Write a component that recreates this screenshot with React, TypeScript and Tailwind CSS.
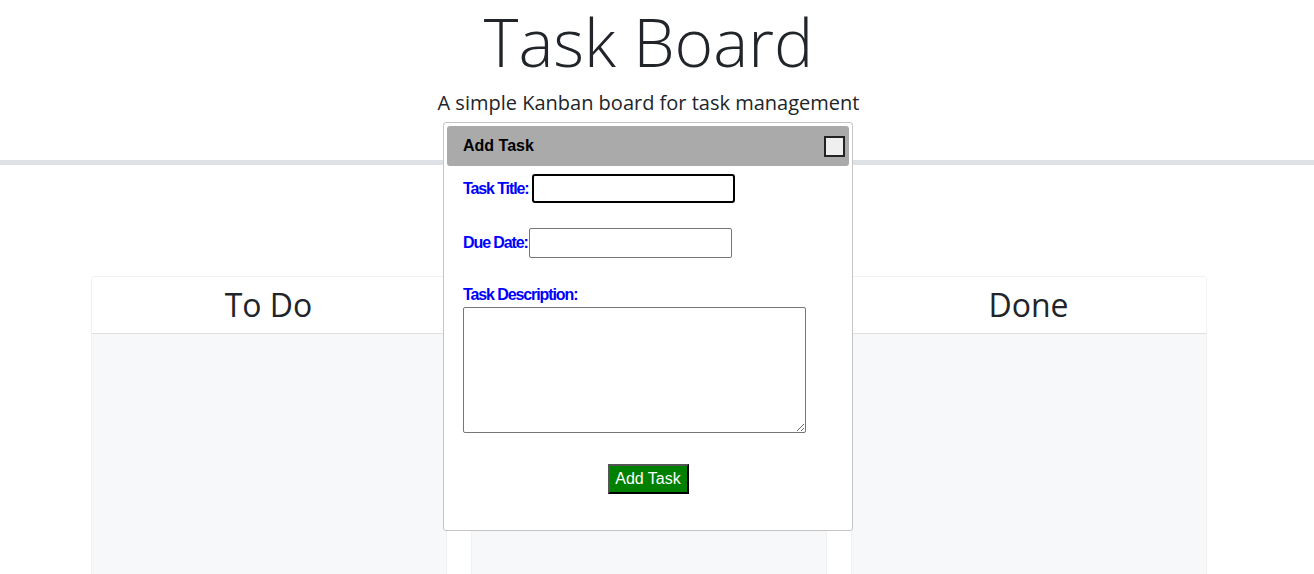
const columns = ['To Do', 'In Progress', 'Done'];

const labelClass =
  "shrink-0 whitespace-nowrap text-[#0000ff] text-[16px] font-bold tracking-[-1.1px] [font-family:'Liberation_Sans',Arial,sans-serif]";

export default function App() {
  return (
    <div className="relative min-h-[574px] overflow-hidden bg-white text-[#212529] [font-family:'Open_Sans',sans-serif]">
      <header className="border-b-[5px] border-[#dee2e6] pt-[1px] pb-[42px]">
        <div className="w-[1297px] text-center">
          <h1 className="text-[66px] leading-[80px] font-light">Task Board</h1>
          <p className="mt-[7px] text-[20px] leading-[30px]">
            A simple Kanban board for task management
          </p>
        </div>
      </header>

      <div className="w-[1297px]">
        <main className="mx-auto mt-[111px] grid w-[1116px] grid-cols-3 gap-[24px]">
          {columns.map((title) => (
            <section key={title} className="overflow-hidden rounded-t-[4px] border border-b-0 border-[#f1f1f1]">
              <h2 className="h-[57px] border-b border-[#dfdfdf] bg-white text-center text-[32px] leading-[56px]">
                {title}
              </h2>
              <div className="h-[260px] bg-[#f7f8fa]" />
            </section>
          ))}
        </main>
      </div>

      {/* add task dialog */}
      <div className="absolute left-[443px] top-[122px] h-[409px] w-[410px] rounded-[3px] border border-[#c5c5c5] bg-white p-[3px] [font-family:'Liberation_Sans',Arial,sans-serif]">
        <div className="flex h-[40px] items-center justify-between rounded-[3px] bg-[#aaaaaa] pl-[16px] pr-[4px]">
          <span className="text-[16px] font-bold text-black">Add Task</span>
          <button className="h-[21px] w-[21px] border-2 border-[#222] bg-[#efefef]" aria-label="close" />
        </div>

        <form className="px-[16px]">
          <div className="mt-[8px] flex items-center">
            <label className={`${labelClass} w-[69px]`}>Task Title:</label>
            <input className="h-[29px] w-[203px] rounded-[3px] border-2 border-black px-1" />
          </div>
          <div className="mt-[25px] flex items-center">
            <label className={`${labelClass} w-[66px]`}>Due Date:</label>
            <input className="h-[30px] w-[203px] rounded-[2px] border border-[#767676] px-1" />
          </div>
          <div className="mt-[27px]">
            <label className={`${labelClass} block leading-[20px]`}>Task Description:</label>
            <textarea className="mt-[2px] block h-[126px] w-[343px] rounded-[2px] border border-[#767676]" />
          </div>
          <div className="mt-[31px] flex justify-center">
            <button
              type="button"
              className="h-[30px] w-[81px] border-2 border-t-[#555] border-l-[#555] border-r-black border-b-black bg-[#008000] text-[16px] text-white"
            >
              Add Task
            </button>
          </div>
        </form>
      </div>
    </div>
  );
}
